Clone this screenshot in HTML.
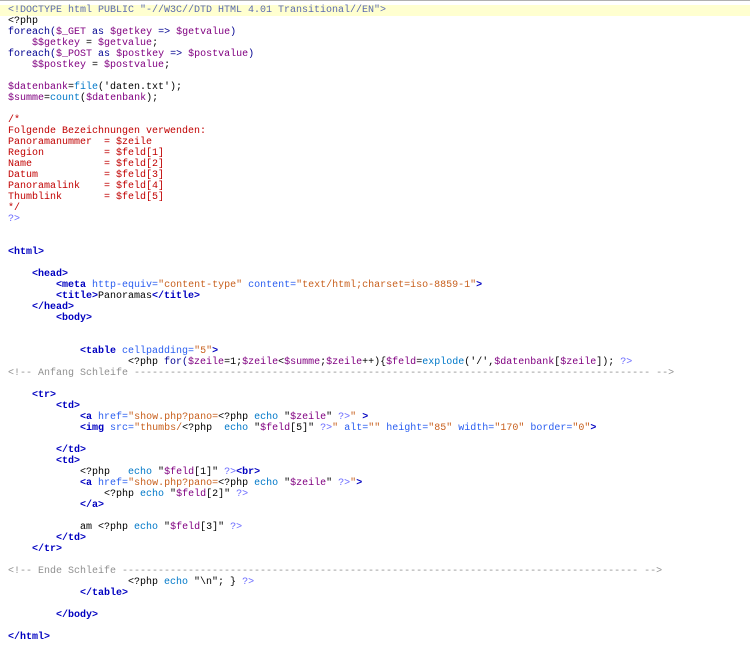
<!DOCTYPE html>
<html><head><meta charset="utf-8"><style>
html,body{margin:0;padding:0;background:#fff;width:750px;height:649px;overflow:hidden}
.top{height:1px;background:#b0b0b0}
pre{margin:0;padding:4px 0 0 8px;font:10px/11px "Liberation Mono",monospace;color:#000}
.hl{background:#ffffd0;display:inline-block;width:742px;margin-left:-8px;padding-left:8px;color:#5a6ab0}
.t{color:#0000c0;font-weight:bold}.a{color:#2a5ef0}.v{color:#c8601e}.p{color:#800080}
.k{color:#000090}.f{color:#0078c8}.q{color:#6a6aff}.c{color:#c00000}.g{color:#909090}
</style></head><body><div class="top"></div><pre><span class="hl">&lt;!DOCTYPE html PUBLIC "-//W3C//DTD HTML 4.01 Transitional//EN"&gt;</span>
&lt;?php
<span class="k">foreach(</span><span class="p">$_GET</span> <span class="k">as</span> <span class="p">$getkey</span> <span class="k">=&gt;</span> <span class="p">$getvalue</span><span class="k">)</span>
    <span class="p">$$getkey</span> = <span class="p">$getvalue</span>;
<span class="k">foreach(</span><span class="p">$_POST</span> <span class="k">as</span> <span class="p">$postkey</span> <span class="k">=&gt;</span> <span class="p">$postvalue</span><span class="k">)</span>
    <span class="p">$$postkey</span> = <span class="p">$postvalue</span>;

<span class="p">$datenbank</span>=<span class="f">file</span>('daten.txt');
<span class="p">$summe</span>=<span class="f">count</span>(<span class="p">$datenbank</span>);

<span class="c">/*
Folgende Bezeichnungen verwenden:
Panoramanummer  = $zeile
Region          = $feld[1]
Name            = $feld[2]
Datum           = $feld[3]
Panoramalink    = $feld[4]
Thumblink       = $feld[5]
*/</span>
<span class="q">?&gt;</span>


<span class="t">&lt;html&gt;</span>

    <span class="t">&lt;head&gt;</span>
        <span class="t">&lt;meta</span> <span class="a">http-equiv=</span><span class="v">"content-type"</span> <span class="a">content=</span><span class="v">"text/html;charset=iso-8859-1"</span><span class="t">&gt;</span>
        <span class="t">&lt;title&gt;</span>Panoramas<span class="t">&lt;/title&gt;</span>
    <span class="t">&lt;/head&gt;</span>
        <span class="t">&lt;body&gt;</span>


            <span class="t">&lt;table</span> <span class="a">cellpadding=</span><span class="v">"5"</span><span class="t">&gt;</span>
                    &lt;?php <span class="k">for(</span><span class="p">$zeile</span>=1;<span class="p">$zeile</span>&lt;<span class="p">$summe</span>;<span class="p">$zeile</span>++){<span class="p">$feld</span>=<span class="f">explode</span>('/',<span class="p">$datenbank</span>[<span class="p">$zeile</span>]); <span class="q">?&gt;</span>
<span class="g">&lt;!-- Anfang Schleife -------------------------------------------------------------------------------------- --&gt;</span>

    <span class="t">&lt;tr&gt;</span>
        <span class="t">&lt;td&gt;</span>
            <span class="t">&lt;a</span> <span class="a">href=</span><span class="v">"show.php?pano=</span>&lt;?php <span class="f">echo</span> "<span class="p">$zeile</span>" <span class="q">?&gt;</span><span class="v">"</span> <span class="t">&gt;</span>
            <span class="t">&lt;img</span> <span class="a">src=</span><span class="v">"thumbs/</span>&lt;?php  <span class="f">echo</span> "<span class="p">$feld</span>[5]" <span class="q">?&gt;</span><span class="v">"</span> <span class="a">alt=</span><span class="v">""</span> <span class="a">height=</span><span class="v">"85"</span> <span class="a">width=</span><span class="v">"170"</span> <span class="a">border=</span><span class="v">"0"</span><span class="t">&gt;</span>

        <span class="t">&lt;/td&gt;</span>
        <span class="t">&lt;td&gt;</span>
            &lt;?php   <span class="f">echo</span> "<span class="p">$feld</span>[1]" <span class="q">?&gt;</span><span class="t">&lt;br&gt;</span>
            <span class="t">&lt;a</span> <span class="a">href=</span><span class="v">"show.php?pano=</span>&lt;?php <span class="f">echo</span> "<span class="p">$zeile</span>" <span class="q">?&gt;</span><span class="v">"</span><span class="t">&gt;</span>
                &lt;?php <span class="f">echo</span> "<span class="p">$feld</span>[2]" <span class="q">?&gt;</span>
            <span class="t">&lt;/a&gt;</span>

            am &lt;?php <span class="f">echo</span> "<span class="p">$feld</span>[3]" <span class="q">?&gt;</span>
        <span class="t">&lt;/td&gt;</span>
    <span class="t">&lt;/tr&gt;</span>

<span class="g">&lt;!-- Ende Schleife -------------------------------------------------------------------------------------- --&gt;</span>
                    &lt;?php <span class="f">echo</span> "\n"; } <span class="q">?&gt;</span>
            <span class="t">&lt;/table&gt;</span>

        <span class="t">&lt;/body&gt;</span>

<span class="t">&lt;/html&gt;</span>
</pre></body></html>
